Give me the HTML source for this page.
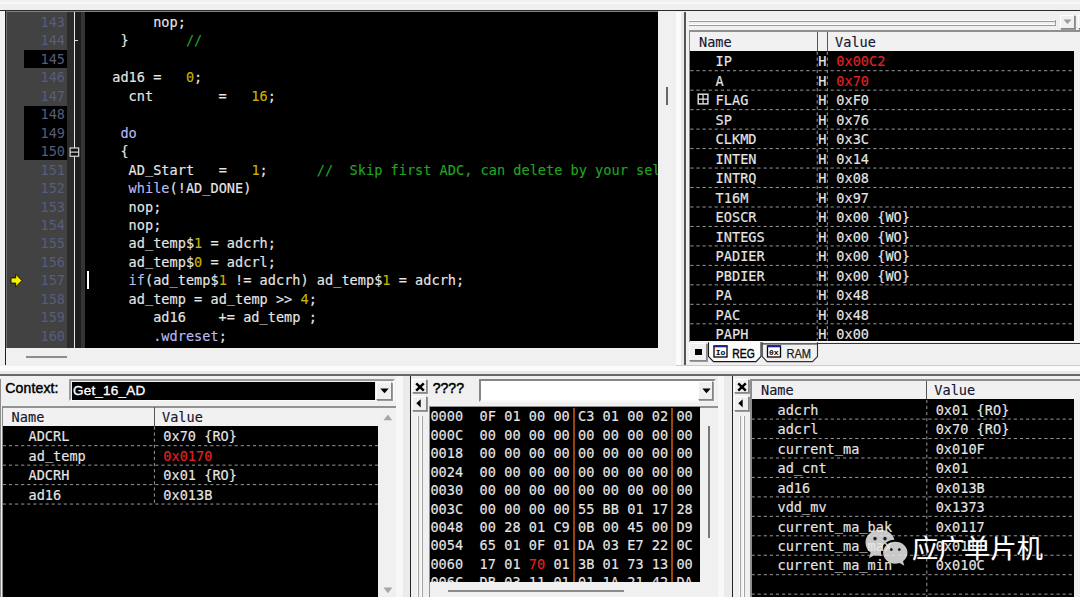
<!DOCTYPE html>
<html><head><meta charset="utf-8"><title>debug</title>
<style>
html,body{margin:0;padding:0}
body{width:1080px;height:597px;position:relative;overflow:hidden;background:#f0f0f0;font-family:"Liberation Sans","DejaVu Sans",sans-serif}
div,span,pre,svg{position:absolute;margin:0;padding:0;box-sizing:border-box}
span.c{position:static}
span.u{position:relative;top:-1.5px}
.m{font-family:"DejaVu Sans Mono","Liberation Mono",monospace;font-size:13.57px;white-space:pre;line-height:18px;height:18px;color:#e6e6e6;letter-spacing:0.018px;-webkit-text-stroke:0.14px}
.ln{color:#575c7b;-webkit-text-stroke:0}
.k{color:#b9b9f2}.n{color:#c9b500}.g{color:#22a522}.r{color:#e32222}
.h{color:#151530}
.b{font-family:"Liberation Sans","DejaVu Sans",sans-serif;font-weight:bold;font-size:13px;color:#000;white-space:pre;line-height:16px}
.dh{height:0;border-top:1px dashed #acacac}
.dv{width:0;border-left:1px dashed #acacac}
.btn{background:#f0f0f0;border:1px solid;border-color:#fff #868686 #868686 #fff;box-shadow:1px 1px 0 #9a9a9a}
</style></head><body>

<div style="left:0px;top:0px;width:1080px;height:2px;background:#f1f1f1;"></div>
<div style="left:0px;top:1.8px;width:1080px;height:2.2px;background:#f9f9f9;"></div>
<div style="left:0px;top:4px;width:1080px;height:6px;background:#efefef;"></div>
<div style="left:0px;top:9.6px;width:1080px;height:1.7px;background:#2c2c2c;"></div>
<div style="left:0px;top:11.5px;width:5.5px;height:355px;background:#f1f1f1;"></div>
<div style="left:5px;top:11.3px;width:1.3px;height:354.2px;background:#1c1c1c;"></div>
<div style="left:6.3px;top:11.3px;width:1.4px;height:336.7px;background:#6c6c6c;"></div>
<div style="left:6.5px;top:11.5px;width:60.5px;height:336.5px;background:#424242;"></div>
<div style="left:67px;top:11.5px;width:7px;height:336.5px;background:#2b2b2b;"></div>
<div style="left:74px;top:11.5px;width:1.2px;height:336.5px;background:#e6e6e6;"></div>
<div style="left:75.2px;top:11.5px;width:6px;height:336.5px;background:#1e1e1e;"></div>
<div style="left:81px;top:11.5px;width:4px;height:336.5px;background:#343434;"></div>
<div style="left:85px;top:11.5px;width:573px;height:336.5px;background:#000;"></div>
<div style="left:6.3px;top:11.3px;width:651.7px;height:1.1px;background:#828282;"></div>
<div style="left:24px;top:50px;width:43px;height:18px;background:#000;"></div>
<div style="left:24px;top:105.5px;width:43px;height:54.5px;background:#000;"></div>
<div style="left:658px;top:11.5px;width:17.5px;height:336.5px;background:#f0f0f0;"></div>
<div style="left:666px;top:87px;width:1.6px;height:17.5px;background:#666;"></div>
<div style="left:6.5px;top:348px;width:669px;height:18px;background:#f0f0f0;"></div>
<div style="left:26px;top:356.3px;width:40.5px;height:1.7px;background:#8c8c8c;"></div>
<div style="left:675.5px;top:11.5px;width:5.5px;height:355px;background:#fbfbfb;"></div>
<div style="left:681px;top:11.5px;width:3px;height:355px;background:#e9e9e9;"></div>
<div style="left:684px;top:11.5px;width:1.7px;height:354px;background:#555;"></div>
<div style="left:85px;top:11.5px;width:573px;height:336.5px;overflow:hidden">
<pre class="m" style="left:2.700000000000003px;top:1.3px">        nop;</pre>
<pre class="m" style="left:2.700000000000003px;top:19.77px">    }       <span class="c g">//</span></pre>
<pre class="m" style="left:2.700000000000003px;top:38.24px"></pre>
<pre class="m" style="left:2.700000000000003px;top:56.71px">   ad16 =   <span class="c n">0</span>;</pre>
<pre class="m" style="left:2.700000000000003px;top:75.18px">     cnt        =   <span class="c n">16</span>;</pre>
<pre class="m" style="left:2.700000000000003px;top:93.65px"></pre>
<pre class="m" style="left:2.700000000000003px;top:112.12px">    <span class="c k">do</span></pre>
<pre class="m" style="left:2.700000000000003px;top:130.59px">    {</pre>
<pre class="m" style="left:2.700000000000003px;top:149.06px">     AD<span class="u">_</span>Start   =   <span class="c n">1</span>;      <span class="c g">//  Skip first ADC, can delete by your self</span></pre>
<pre class="m" style="left:2.700000000000003px;top:167.53px">     <span class="c k">while</span>(!AD<span class="u">_</span>DONE)</pre>
<pre class="m" style="left:2.700000000000003px;top:186.0px">     nop;</pre>
<pre class="m" style="left:2.700000000000003px;top:204.47px">     nop;</pre>
<pre class="m" style="left:2.700000000000003px;top:222.94px">     ad<span class="u">_</span>temp$<span class="c n">1</span> = adcrh;</pre>
<pre class="m" style="left:2.700000000000003px;top:241.41px">     ad<span class="u">_</span>temp$<span class="c n">0</span> = adcrl;</pre>
<pre class="m" style="left:2.700000000000003px;top:259.88px">     <span class="c k">if</span>(ad<span class="u">_</span>temp$<span class="c n">1</span> != adcrh) ad<span class="u">_</span>temp$<span class="c n">1</span> = adcrh;</pre>
<pre class="m" style="left:2.700000000000003px;top:278.35px">     ad<span class="u">_</span>temp = ad<span class="u">_</span>temp >> <span class="c n">4</span>;</pre>
<pre class="m" style="left:2.700000000000003px;top:296.82px">        ad16    += ad<span class="u">_</span>temp ;</pre>
<pre class="m" style="left:2.700000000000003px;top:315.29px">        <span class="c k">.wdreset</span>;</pre>
</div>
<pre class="m ln" style="left:40.5px;top:12.8px">143</pre>
<pre class="m ln" style="left:40.5px;top:31.27px">144</pre>
<pre class="m ln" style="left:40.5px;top:49.74px">145</pre>
<pre class="m ln" style="left:40.5px;top:68.21px">146</pre>
<pre class="m ln" style="left:40.5px;top:86.68px">147</pre>
<pre class="m ln" style="left:40.5px;top:105.15px">148</pre>
<pre class="m ln" style="left:40.5px;top:123.62px">149</pre>
<pre class="m ln" style="left:40.5px;top:142.09px">150</pre>
<pre class="m ln" style="left:40.5px;top:160.56px">151</pre>
<pre class="m ln" style="left:40.5px;top:179.03px">152</pre>
<pre class="m ln" style="left:40.5px;top:197.5px">153</pre>
<pre class="m ln" style="left:40.5px;top:215.97px">154</pre>
<pre class="m ln" style="left:40.5px;top:234.44px">155</pre>
<pre class="m ln" style="left:40.5px;top:252.91px">156</pre>
<pre class="m ln" style="left:40.5px;top:271.38px">157</pre>
<pre class="m ln" style="left:40.5px;top:289.85px">158</pre>
<pre class="m ln" style="left:40.5px;top:308.32px">159</pre>
<pre class="m ln" style="left:40.5px;top:326.79px">160</pre>
<div style="left:87.3px;top:271px;width:1.8px;height:18px;background:#fff;"></div>
<svg style="left:9px;top:272px" width="15" height="17" viewBox="0 0 15 17"><path d="M2 5.9H6.7V2L12.9 8.5L6.7 15V11.1H2Z" fill="#f6f200" stroke="#161600" stroke-width="1"/></svg>
<div style="left:75.2px;top:39.8px;width:3.2px;height:1.4px;background:#d8d8d8;"></div>
<svg style="left:69px;top:146.5px" width="11" height="11" viewBox="0 0 11 11"><rect x="1.1" y="1" width="8.6" height="8.2" fill="#111" stroke="#ececec" stroke-width="1.1"/><path d="M1.1 5.1H9.7" stroke="#ececec" stroke-width="1.1"/></svg>
<div style="left:685.7px;top:11.5px;width:394.3px;height:354px;background:#f0f0f0;"></div>
<div style="left:689px;top:20px;width:366.5px;height:1px;background:#fdfdfd;"></div>
<div style="left:689px;top:21px;width:366.5px;height:1.2px;background:#9a9a9a;"></div>
<div style="left:689px;top:23.6px;width:366.5px;height:1px;background:#fdfdfd;"></div>
<div style="left:689px;top:24.6px;width:366.5px;height:1.2px;background:#9a9a9a;"></div>
<div style="left:1055px;top:20px;width:1.2px;height:5.8px;background:#9a9a9a;"></div>
<div class="btn" style="left:1060px;top:14.5px;width:15px;height:14.5px"></div>
<svg style="left:1063px;top:19px" width="9" height="6" viewBox="0 0 9 6"><path d="M0.5 0.5H8.5L4.5 5Z" fill="#9a9a9a"/></svg>
<div class="btn" style="left:1077.5px;top:14.5px;width:6px;height:14.5px"></div>
<div style="left:689px;top:30.3px;width:391px;height:1.4px;background:#8f8f8f;"></div>
<div style="left:689px;top:31.5px;width:1.3px;height:310px;background:#8a8a8a;"></div>
<div style="left:690.3px;top:31.7px;width:384px;height:19px;background:#f1f1f1;"></div>
<div style="left:690.3px;top:50.7px;width:383.9px;height:290px;background:#000;"></div>
<div style="left:817px;top:32px;width:1.3px;height:19px;background:#555;"></div>
<div style="left:826.6px;top:32px;width:1.3px;height:19px;background:#555;"></div>
<pre class="m h" style="left:699px;top:33.0px">Name</pre>
<pre class="m h" style="left:835px;top:33.0px">Value</pre>
<div style="left:690.3px;top:50.7px;width:383.9px;height:290px;overflow:hidden">
<pre class="m" style="left:25.3px;top:1.50px">IP</pre>
<pre class="m" style="left:128.0px;top:1.50px">H</pre>
<pre class="m r" style="left:146.0px;top:1.50px">0x00C2</pre>
<pre class="m" style="left:25.3px;top:21.00px">A</pre>
<pre class="m" style="left:128.0px;top:21.00px">H</pre>
<pre class="m r" style="left:146.0px;top:21.00px">0x70</pre>
<pre class="m" style="left:25.3px;top:40.50px">FLAG</pre>
<pre class="m" style="left:128.0px;top:40.50px">H</pre>
<pre class="m " style="left:146.0px;top:40.50px">0xF0</pre>
<pre class="m" style="left:25.3px;top:60.00px">SP</pre>
<pre class="m" style="left:128.0px;top:60.00px">H</pre>
<pre class="m " style="left:146.0px;top:60.00px">0x76</pre>
<pre class="m" style="left:25.3px;top:79.50px">CLKMD</pre>
<pre class="m" style="left:128.0px;top:79.50px">H</pre>
<pre class="m " style="left:146.0px;top:79.50px">0x3C</pre>
<pre class="m" style="left:25.3px;top:99.00px">INTEN</pre>
<pre class="m" style="left:128.0px;top:99.00px">H</pre>
<pre class="m " style="left:146.0px;top:99.00px">0x14</pre>
<pre class="m" style="left:25.3px;top:118.50px">INTRQ</pre>
<pre class="m" style="left:128.0px;top:118.50px">H</pre>
<pre class="m " style="left:146.0px;top:118.50px">0x08</pre>
<pre class="m" style="left:25.3px;top:138.00px">T16M</pre>
<pre class="m" style="left:128.0px;top:138.00px">H</pre>
<pre class="m " style="left:146.0px;top:138.00px">0x97</pre>
<pre class="m" style="left:25.3px;top:157.50px">EOSCR</pre>
<pre class="m" style="left:128.0px;top:157.50px">H</pre>
<pre class="m " style="left:146.0px;top:157.50px">0x00 {WO}</pre>
<pre class="m" style="left:25.3px;top:177.00px">INTEGS</pre>
<pre class="m" style="left:128.0px;top:177.00px">H</pre>
<pre class="m " style="left:146.0px;top:177.00px">0x00 {WO}</pre>
<pre class="m" style="left:25.3px;top:196.50px">PADIER</pre>
<pre class="m" style="left:128.0px;top:196.50px">H</pre>
<pre class="m " style="left:146.0px;top:196.50px">0x00 {WO}</pre>
<pre class="m" style="left:25.3px;top:216.00px">PBDIER</pre>
<pre class="m" style="left:128.0px;top:216.00px">H</pre>
<pre class="m " style="left:146.0px;top:216.00px">0x00 {WO}</pre>
<pre class="m" style="left:25.3px;top:235.50px">PA</pre>
<pre class="m" style="left:128.0px;top:235.50px">H</pre>
<pre class="m " style="left:146.0px;top:235.50px">0x48</pre>
<pre class="m" style="left:25.3px;top:255.00px">PAC</pre>
<pre class="m" style="left:128.0px;top:255.00px">H</pre>
<pre class="m " style="left:146.0px;top:255.00px">0x48</pre>
<pre class="m" style="left:25.3px;top:274.50px">PAPH</pre>
<pre class="m" style="left:128.0px;top:274.50px">H</pre>
<pre class="m " style="left:146.0px;top:274.50px">0x00</pre>
</div>
<svg style="left:697.3px;top:93.3px" width="12" height="12" viewBox="0 0 12 12"><rect x="1.2" y="1.2" width="9.7" height="9.7" fill="#000" stroke="#e6e6e6" stroke-width="1.4"/><path d="M1.2 6.05H10.9M6.05 1.2V10.9" stroke="#e6e6e6" stroke-width="1.2"/></svg>
<div style="left:690.3px;top:340.7px;width:389.7px;height:1.6px;background:#fafafa;"></div>
<div style="left:817.5px;top:342.9px;width:262.5px;height:1.1px;background:#333;"></div>
<div style="left:676px;top:365.2px;width:404px;height:1.1px;background:#cdcdcd;"></div>
<div class="btn" style="left:689px;top:342.5px;width:18px;height:18.5px"></div>
<div style="left:695px;top:348.5px;width:6.5px;height:6.5px;background:#000;"></div>
<svg style="left:706px;top:341px" width="116" height="24" viewBox="0 0 116 24">
<path d="M2.5 1.3 V15.5 L7.5 20.6 H50 L55 15.5 V1.3" fill="#fcfcfc" stroke="#1a1a1a" stroke-width="1.1"/>
<path d="M56.2 1.3 V15.5 L61 20.6 H106.500 L111.500 15.500 V1.300" fill="#f0f0f0" stroke="#333" stroke-width="1.1"/>
<rect x="8" y="5" width="13" height="11" fill="#fff" stroke="#000" stroke-width="1.3"/><rect x="7.5" y="4.300" width="14" height="2" fill="#1c1c8c"/>
<rect x="61.500" y="5" width="13" height="11" fill="#fff" stroke="#000" stroke-width="1.3"/><rect x="61" y="4.300" width="14" height="2" fill="#1c1c8c"/>
<text x="9.800" y="14" font-family='"Liberation Mono",monospace' font-size="8" font-weight="bold" fill="#000">Io</text>
<text x="63" y="14" font-family='"Liberation Mono",monospace' font-size="8" font-weight="bold" fill="#000">0x</text>
<text x="26.300" y="17" textLength="22.400" lengthAdjust="spacingAndGlyphs" font-family='"Liberation Sans",sans-serif' font-size="13" fill="#000" stroke="#000" stroke-width="0.45">REG</text>
<text x="80.400" y="17" textLength="24.700" lengthAdjust="spacingAndGlyphs" font-family='"Liberation Sans",sans-serif' font-size="13" fill="#1a1a1a" stroke="#1a1a1a" stroke-width="0.25">RAM</text>
<path d="M56.2 2.9H111.500" stroke="#333" stroke-width="1.1"/>
</svg>
<div style="left:0px;top:366px;width:1080px;height:5.2px;background:#fbfbfb;"></div>
<div style="left:0px;top:371.2px;width:1080px;height:3.2px;background:#eaeaea;"></div>
<div style="left:0px;top:374.3px;width:1080px;height:1.8px;background:#686868;"></div>
<div style="left:0px;top:376.1px;width:1080px;height:221px;background:#f0f0f0;"></div>
<div style="left:0px;top:378.5px;width:1px;height:218.5px;background:#8c8c8c;"></div>
<pre class="b" style="left:5.3px;top:380.2px;font-size:14px;font-weight:normal;-webkit-text-stroke:0.45px #000;letter-spacing:0.15px">Context:</pre>
<div style="left:69px;top:379.3px;width:326px;height:22.2px;background:#fff;border:2px solid;border-color:#9c9c9c #fafafa #fafafa #9c9c9c;background:#f0f0f0"></div>
<div style="left:71.5px;top:381.6px;width:303.6px;height:18.8px;background:#000;"></div>
<pre class="b" style="left:73px;top:383px;color:#fff;font-size:13.5px;font-weight:normal;-webkit-text-stroke:0.35px #fff;letter-spacing:0.2px">Get_16_AD</pre>
<div class="btn" style="left:375.8px;top:381.5px;width:16.2px;height:18.6px"></div>
<svg style="left:379.6px;top:388.3px" width="9" height="6" viewBox="0 0 9 6"><path d="M0.3 0.5H8.7L4.5 5.2Z" fill="#000"/></svg>
<div style="left:1.5px;top:405.7px;width:394px;height:2px;background:#929292;"></div>
<div style="left:1.5px;top:405.7px;width:1.5px;height:192px;background:#8a8a8a;"></div>
<div style="left:3px;top:407.7px;width:375.3px;height:18px;background:#f1f1f1;"></div>
<div style="left:2.8px;top:425.6px;width:375.4px;height:172px;background:#000;"></div>
<div style="left:153.6px;top:407px;width:1.3px;height:18.6px;background:#555;"></div>
<pre class="m h" style="left:11.6px;top:408.0px">Name</pre>
<pre class="m h" style="left:162px;top:408.0px">Value</pre>
<pre class="m " style="left:28.5px;top:427.3px">ADCRL</pre>
<pre class="m " style="left:163.3px;top:427.3px">0x70 {RO}</pre>
<pre class="m " style="left:28.5px;top:446.75px">ad<span class="u">_</span>temp</pre>
<pre class="m r" style="left:163.3px;top:446.75px">0x0170</pre>
<pre class="m " style="left:28.5px;top:466.2px">ADCRH</pre>
<pre class="m " style="left:163.3px;top:466.2px">0x01 {RO}</pre>
<pre class="m " style="left:28.5px;top:485.65px">ad16</pre>
<pre class="m " style="left:163.3px;top:485.65px">0x013B</pre>
<div style="left:378.2px;top:407.7px;width:17.3px;height:190px;background:#f0f0f0;"></div>
<svg style="left:382.5px;top:413.5px" width="10" height="7" viewBox="0 0 10 7"><path d="M0.5 6.3H9.3L4.9 0.6Z" fill="#a6a6a6"/></svg>
<svg style="left:382.5px;top:586.5px" width="10" height="7" viewBox="0 0 10 7"><path d="M0.5 0.6H9.3L4.9 6.3Z" fill="#a6a6a6"/></svg>
<div style="left:396px;top:376.1px;width:6.5px;height:221px;background:#f7f7f7;"></div>
<div style="left:402.5px;top:376.1px;width:7.5px;height:221px;background:#ebebeb;"></div>
<div style="left:410.1px;top:375.5px;width:1.2px;height:221.5px;background:#262626;"></div>
<div class="btn" style="left:412.2px;top:379px;width:14.8px;height:14.4px"></div>
<svg style="left:414.8px;top:381.6px" width="10" height="10" viewBox="0 0 10 10"><path d="M1.2 1.4L8.8 8.6M8.8 1.4L1.2 8.6" stroke="#000" stroke-width="2.5"/></svg>
<div class="btn" style="left:412.2px;top:396.2px;width:14.8px;height:14.6px"></div>
<svg style="left:416.2px;top:399.2px" width="5" height="8.6" viewBox="0 0 5 8.6"><path d="M4.7 0.2V8.4L0.3 4.3Z" fill="#000"/></svg>
<div style="left:416.7px;top:415.5px;width:1px;height:182px;background:#fcfcfc;"></div>
<div style="left:417.7px;top:415.5px;width:1.2px;height:182px;background:#a4a4a4;"></div>
<div style="left:420.9px;top:415.5px;width:1px;height:182px;background:#fcfcfc;"></div>
<div style="left:421.9px;top:415.5px;width:1.2px;height:182px;background:#a4a4a4;"></div>
<pre class="b" style="left:432.8px;top:380.1px;font-size:14px;font-weight:normal;-webkit-text-stroke:0.5px #000">????</pre>
<div style="left:479.3px;top:379.2px;width:236.5px;height:22.6px;background:#fff;border:2px solid;border-color:#868686 #f6f6f6 #f6f6f6 #868686;background:#f0f0f0"></div>
<div style="left:481.3px;top:381.2px;width:216.5px;height:19.3px;background:#fff;"></div>
<div class="btn" style="left:698.4px;top:381.3px;width:15px;height:19px"></div>
<svg style="left:702px;top:388.2px" width="9" height="6" viewBox="0 0 9 6"><path d="M0.3 0.5H8.7L4.5 5.2Z" fill="#000"/></svg>
<div style="left:428.5px;top:406px;width:289px;height:1.6px;background:#929292;"></div>
<div style="left:428.5px;top:406px;width:1.6px;height:192px;background:#929292;"></div>
<div style="left:430px;top:407.4px;width:270px;height:174.4px;background:#000;"></div>
<div style="left:430px;top:407.5px;width:270px;height:174.3px;overflow:hidden">
<pre class="m" style="left:0.4px;top:-0.20px;letter-spacing:0.035px">0000  0F 01 00 00 C3 01 00 02 00</pre>
<pre class="m" style="left:0.4px;top:18.24px;letter-spacing:0.035px">000C  00 00 00 00 00 00 00 00 00</pre>
<pre class="m" style="left:0.4px;top:36.68px;letter-spacing:0.035px">0018  00 00 00 00 00 00 00 00 00</pre>
<pre class="m" style="left:0.4px;top:55.12px;letter-spacing:0.035px">0024  00 00 00 00 00 00 00 00 00</pre>
<pre class="m" style="left:0.4px;top:73.56px;letter-spacing:0.035px">0030  00 00 00 00 00 00 00 00 00</pre>
<pre class="m" style="left:0.4px;top:92.00px;letter-spacing:0.035px">003C  00 00 00 00 55 BB 01 17 28</pre>
<pre class="m" style="left:0.4px;top:110.44px;letter-spacing:0.035px">0048  00 28 01 C9 0B 00 45 00 D9</pre>
<pre class="m" style="left:0.4px;top:128.88px;letter-spacing:0.035px">0054  65 01 0F 01 DA 03 E7 22 0C</pre>
<pre class="m" style="left:0.4px;top:147.32px;letter-spacing:0.035px">0060  17 01 <span class="c r">70</span> 01 3B 01 73 13 00</pre>
<pre class="m" style="left:0.4px;top:165.76px;letter-spacing:0.035px">006C  DB 03 11 01 01 1A 21 42 DA</pre>
<div style="left:143px;top:0;width:2px;height:175px;background:#9c4208"></div>
<div style="left:240.79999999999995px;top:0;width:2px;height:175px;background:#9c4208"></div>
</div>
<div style="left:700px;top:407.5px;width:17.5px;height:190px;background:#f0f0f0;"></div>
<div style="left:708.2px;top:425.5px;width:1.6px;height:112px;background:#777;"></div>
<div style="left:430px;top:581.8px;width:270px;height:16px;background:#f0f0f0;"></div>
<div style="left:448px;top:590.2px;width:176px;height:1.7px;background:#8c8c8c;"></div>
<div style="left:717.5px;top:376.1px;width:6.5px;height:221px;background:#f8f8f8;"></div>
<div style="left:724px;top:376.1px;width:7.5px;height:221px;background:#ebebeb;"></div>
<div style="left:731.7px;top:375.5px;width:1.2px;height:221.5px;background:#262626;"></div>
<div class="btn" style="left:734.1px;top:379px;width:14.8px;height:14.4px"></div>
<svg style="left:736.7px;top:381.6px" width="10" height="10" viewBox="0 0 10 10"><path d="M1.2 1.4L8.8 8.6M8.8 1.4L1.2 8.6" stroke="#000" stroke-width="2.5"/></svg>
<div class="btn" style="left:734.1px;top:396.2px;width:14.8px;height:14.6px"></div>
<svg style="left:738.1px;top:399.2px" width="5" height="8.6" viewBox="0 0 5 8.6"><path d="M4.7 0.2V8.4L0.3 4.3Z" fill="#000"/></svg>
<div style="left:738.8px;top:415.5px;width:1px;height:182px;background:#fcfcfc;"></div>
<div style="left:739.8px;top:415.5px;width:1.2px;height:182px;background:#a4a4a4;"></div>
<div style="left:742.9px;top:415.5px;width:1px;height:182px;background:#fcfcfc;"></div>
<div style="left:743.9px;top:415.5px;width:1.2px;height:182px;background:#a4a4a4;"></div>
<div style="left:750px;top:378.8px;width:330px;height:2px;background:#8e8e8e;"></div>
<div style="left:750px;top:378.8px;width:1.8px;height:219px;background:#8e8e8e;"></div>
<div style="left:751.8px;top:380.8px;width:322.4px;height:18.2px;background:#f1f1f1;"></div>
<div style="left:751.5px;top:399px;width:322.7px;height:198px;background:#000;"></div>
<div style="left:926px;top:380.5px;width:1.3px;height:18.5px;background:#555;"></div>
<pre class="m h" style="left:761px;top:381.0px">Name</pre>
<pre class="m h" style="left:934.3px;top:381.0px">Value</pre>
<pre class="m " style="left:777.5px;top:400.8px">adcrh</pre>
<pre class="m " style="left:935.7px;top:400.8px">0x01 {RO}</pre>
<pre class="m " style="left:777.5px;top:420.25px">adcrl</pre>
<pre class="m " style="left:935.7px;top:420.25px">0x70 {RO}</pre>
<pre class="m " style="left:777.5px;top:439.7px">current<span class="u">_</span>ma</pre>
<pre class="m " style="left:935.7px;top:439.7px">0x010F</pre>
<pre class="m " style="left:777.5px;top:459.15px">ad<span class="u">_</span>cnt</pre>
<pre class="m " style="left:935.7px;top:459.15px">0x01</pre>
<pre class="m " style="left:777.5px;top:478.6px">ad16</pre>
<pre class="m " style="left:935.7px;top:478.6px">0x013B</pre>
<pre class="m " style="left:777.5px;top:498.05px">vdd<span class="u">_</span>mv</pre>
<pre class="m " style="left:935.7px;top:498.05px">0x1373</pre>
<pre class="m " style="left:777.5px;top:517.5px">current<span class="u">_</span>ma<span class="u">_</span>bak</pre>
<pre class="m " style="left:935.7px;top:517.5px">0x0117</pre>
<pre class="m " style="left:777.5px;top:536.95px">current<span class="u">_</span>ma<span class="u">_</span>max</pre>
<pre class="m " style="left:935.7px;top:536.95px">0x0111</pre>
<pre class="m " style="left:777.5px;top:556.4px">current<span class="u">_</span>ma<span class="u">_</span>min</pre>
<pre class="m " style="left:935.7px;top:556.4px">0x010C</pre>
<svg style="left:0;top:0" width="1080" height="597" viewBox="0 0 1080 597"><g fill="none" stroke="#989898" stroke-width="1" stroke-dasharray="3.2 2.9"><path d="M690.3 70.70H1074.2"/><path d="M690.3 90.17H1074.2"/><path d="M690.3 109.64H1074.2"/><path d="M690.3 129.11H1074.2"/><path d="M690.3 148.58H1074.2"/><path d="M690.3 168.05H1074.2"/><path d="M690.3 187.52H1074.2"/><path d="M690.3 206.99H1074.2"/><path d="M690.3 226.46H1074.2"/><path d="M690.3 245.93H1074.2"/><path d="M690.3 265.40H1074.2"/><path d="M690.3 284.87H1074.2"/><path d="M690.3 304.34H1074.2"/><path d="M690.3 323.81H1074.2"/><path d="M817.20 51.5V340.7"/><path d="M827.30 51.5V340.7"/><path d="M2.8 445.70H378.2"/><path d="M2.8 465.15H378.2"/><path d="M2.8 484.60H378.2"/><path d="M2.8 504.05H378.2"/><path d="M154.40 426.4V504.0"/><path d="M751.5 419.10H1074.2"/><path d="M751.5 438.55H1074.2"/><path d="M751.5 458.00H1074.2"/><path d="M751.5 477.45H1074.2"/><path d="M751.5 496.90H1074.2"/><path d="M751.5 516.35H1074.2"/><path d="M751.5 535.80H1074.2"/><path d="M751.5 555.25H1074.2"/><path d="M751.5 574.70H1074.2"/><path d="M751.5 594.15H1074.2"/><path d="M926.80 399.8V597.0"/></g></svg>
<svg style="left:862.5px;top:525.8px" width="48" height="48" viewBox="0 0 48 44" preserveAspectRatio="none">
<g fill="#e9e9e9" fill-opacity="0.86">
<path d="M17 3.5C8.5 3.5 2.5 8.8 2.5 15.3c0 3.7 2 6.9 5.2 9.1L6 29.5l5.6-3c1.600.5 3.400.8 5.400.8.5 0 1 0 1.500-.1C18.200 26 18 25 18 24c0-6.300 6-11.400 13.400-11.500C30 7.300 24.200 3.500 17 3.500Z"/>
<path d="M32.300 14.500c-6.800 0-12.200 4.500-12.200 10s5.400 10 12.200 10c1.500 0 3-.2 4.300-.6l4.700 2.500-1.300-4.100c2.700-1.800 4.500-4.600 4.500-7.800 0-5.500-5.400-10-12.200-10Z"/>
</g>
<g fill="#222"><circle cx="12" cy="11.500" r="1.700"/><circle cx="22" cy="11.500" r="1.700"/><circle cx="28.300" cy="21.500" r="1.400"/><circle cx="36.300" cy="21.500" r="1.400"/></g>
</svg>
<div style="left:912px;top:531.2px;height:36px;line-height:36px;font-family:'Liberation Sans','Noto Sans CJK SC',sans-serif;font-weight:400;font-size:26.2px;color:#fff;white-space:pre;text-shadow:0 0 1px rgba(255,255,255,.4)">应广单片机</div>
</body></html>
